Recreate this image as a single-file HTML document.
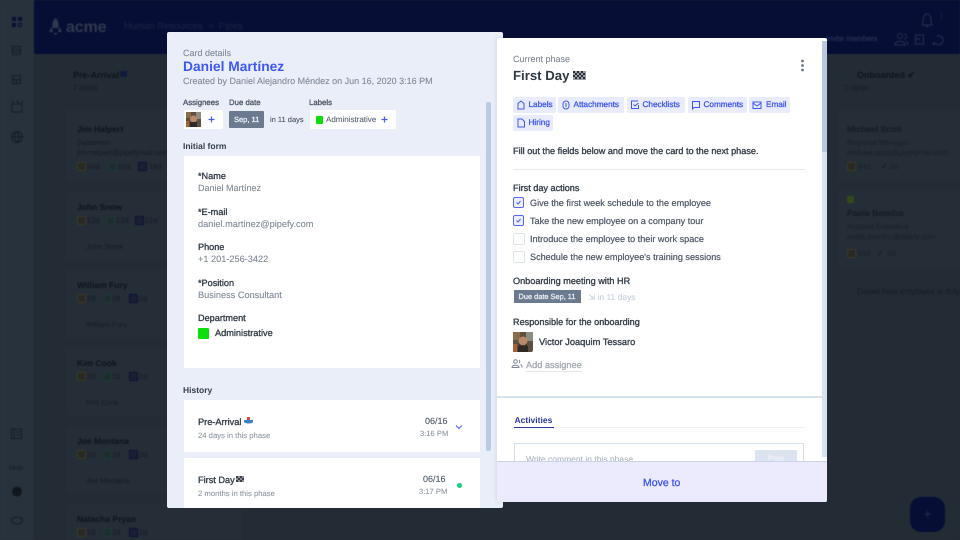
<!DOCTYPE html>
<html><head><meta charset="utf-8">
<style>
html,body{margin:0;padding:0;background:#232b35}
body{width:960px;height:540px;overflow:hidden;position:relative;font-family:"Liberation Sans",sans-serif;text-rendering:geometricPrecision}
#clip{position:absolute;left:0;top:0;width:960px;height:540px;overflow:hidden}
#bg{position:absolute;left:0;top:0;width:960px;height:540px;overflow:hidden;background:#232b35;filter:blur(.5px)}
#fg{position:absolute;left:0;top:0;width:960px;height:540px;overflow:hidden;filter:blur(.2px)}
.a,.t{position:absolute}
.t{white-space:nowrap;line-height:12px;-webkit-text-stroke:.1px currentColor}
.b{font-weight:bold;-webkit-text-stroke:0}
.m{-webkit-text-stroke:.3px currentColor}
.bg1{color:#0e141a}.bg2{color:#191f28}
.d{color:#36404b;font-size:9.15px;-webkit-text-stroke:.35px #36404b}
.g{color:#7f8896;font-size:9px}
.chip{position:absolute;height:16px;background:#e9ecfd;border-radius:2px;color:#3f57f0;font-size:8.2px;-webkit-text-stroke:.3px #3f57f0;line-height:16px;white-space:nowrap}
.chip svg{position:absolute;left:3px;top:3px}
.chip span{position:absolute;left:15.5px;top:0}
.card{position:absolute;background:#252d36}
.cb{position:absolute;left:513px;width:10px;height:10px;border-radius:2px;border:1px solid #dfe3ea;background:#fff}
.cb.on{border:1.5px solid #5a68ee;background:#eceefd;width:9px;height:9px}
.cb svg{position:absolute;left:1px;top:1px}
.sm{position:absolute;width:7px;height:7px;border-radius:1px;border:1px solid}
.s1{border-color:#3a3a26;background:#282a22}.s2{border-color:#1a3a3a;background:#1e2d2c}.s3{border-color:#0a1038;background:#1a2030}
</style></head><body>
<div id="clip">
<div id="bg">
<!-- sidebar -->
<div class="a" style="left:0;top:0;width:34px;height:540px;background:#28323c"></div>
<div class="a" style="left:34px;top:0;width:926px;height:54px;background:#070e35"></div>
<svg class="a" style="left:0;top:0" width="34" height="540" fill="none">
<g fill="#070e35"><rect x="12" y="17" width="4" height="4"/><rect x="18" y="17" width="4" height="4"/><rect x="12" y="23" width="4" height="4"/><rect x="18.5" y="23.5" width="3" height="3" fill="none" stroke="#070e35"/></g>
<g stroke="#151b23"><rect x="12.5" y="46.5" width="8" height="8"/><path d="M12.5 49.5h8M12.5 52h8"/><rect x="12.5" y="75.5" width="8" height="8"/><path d="M12.5 79.5h8M16.5 79.5v4"/><rect x="12" y="104" width="10" height="8"/><path d="M17 100l2 4M13 103l-1-2M22 103l1-2"/><circle cx="17" cy="137" r="5.5"/><path d="M11.5 137h11M17 131.5c-3 3-3 8 0 11M17 131.5c3 3 3 8 0 11"/>
<rect x="11.5" y="429" width="10" height="9.5"/><path d="M14 429v9.5M16 432h4M16 435h4"/></g>
<circle cx="17" cy="491.5" r="5" fill="#12171e"/>
<ellipse cx="17" cy="520.5" rx="5.5" ry="3.5" stroke="#151b23"/>
</svg>
<div class="t" style="left:9px;top:463px;font-size:7px;color:#1b222a">Help</div>

<!-- header -->
<svg class="a" style="left:48px;top:18px" width="16" height="18"><path d="M7.5 0c3 2.5 3.5 6 3 10H4.5C4 6 4.5 2.5 7.5 0zM3.5 9L1 14h4zM11.5 9L14 14h-4zM5 15h5l-2.5 2z" fill="#30384c"/></svg>
<div class="t b" style="left:66px;top:19px;font-size:16px;line-height:17px;color:#30384c;letter-spacing:-.1px">acme</div>
<div class="t" style="left:124px;top:21px;font-size:9.5px;color:#1b2349">Human Resources &nbsp;&gt;&nbsp; Pipes</div>
<div class="t m" style="left:826px;top:33px;font-size:7.5px;color:#272f52">Invite members</div>
<svg class="a" style="left:888px;top:8px" width="66" height="40" fill="none" stroke="#272f52"><path d="M35 12c0-8 8-8 8 0v3l1 2h-10l1-2zM37.5 18.5h3"/><path d="M53 4h1M53 7h1M53 10h1" stroke-width="1.2"/><circle cx="12" cy="28" r="2.5"/><path d="M7 37c0-5 10-5 10 0zM16 26a2.5 2.5 0 010 5M18 33c1.5 1 1.5 3 1.5 4"/><rect x="27.5" y="27" width="8" height="9"/><path d="M27 31h5M49 28a4.5 4.5 0 11-2 7l-2 2 1-3"/></svg>

<!-- Background columns -->
<div class="t b bg1" style="left:73px;top:69px;font-size:9px">Pre-Arrival</div>
<div class="a" style="left:120px;top:71px;width:7px;height:6px;background:#111a3e"></div>
<div class="t bg2" style="left:73px;top:82px;font-size:7.5px">7 cards</div>

<div class="card" style="left:66px;top:110px;width:101px;height:72px"></div>
<div class="t b bg1" style="left:77px;top:123px;font-size:8.5px">Jim Halpert</div>
<div class="t bg2" style="left:77px;top:137px;font-size:7.5px">Salesman</div>
<div class="t bg2" style="left:77px;top:147px;font-size:7.5px">jim.halpert@pipefymail.com</div>
<div class="t bg2" style="left:87px;top:161px;font-size:7.5px">94d</div><div class="t bg2" style="left:118px;top:161px;font-size:7.5px">92d</div><div class="t bg2" style="left:149px;top:161px;font-size:7.5px">18d</div>
<div class="sm s1" style="left:77px;top:162px"></div><div class="sm s2" style="left:108px;top:162px"></div><div class="sm s3" style="left:138px;top:162px"></div>

<div class="card" style="left:66px;top:192px;width:101px;height:68px"></div>
<div class="t b bg1" style="left:77px;top:201px;font-size:8.5px">John Snow</div>
<div class="t bg2" style="left:87px;top:215px;font-size:7.5px">12d</div><div class="t bg2" style="left:116px;top:215px;font-size:7.5px">12d</div><div class="t bg2" style="left:145px;top:215px;font-size:7.5px">12d</div>
<div class="sm s1" style="left:77px;top:216px"></div><div class="sm s2" style="left:106px;top:216px"></div><div class="sm s3" style="left:135px;top:216px"></div>
<div class="t bg2" style="left:86px;top:241px;font-size:7.5px">John Snow</div>

<div class="card" style="left:66px;top:270px;width:101px;height:68px"></div>
<div class="t b bg1" style="left:77px;top:279px;font-size:8.5px">William Fury</div>
<div class="t bg2" style="left:87px;top:293px;font-size:7.5px">2d</div><div class="t bg2" style="left:112px;top:293px;font-size:7.5px">2d</div><div class="t bg2" style="left:139px;top:293px;font-size:7.5px">2d</div>
<div class="sm s1" style="left:77px;top:294px"></div><div class="sm s2" style="left:103px;top:294px"></div><div class="sm s3" style="left:129px;top:294px"></div>
<div class="t bg2" style="left:86px;top:319px;font-size:7.5px">William Fury</div>

<div class="card" style="left:66px;top:348px;width:101px;height:68px"></div>
<div class="t b bg1" style="left:77px;top:357px;font-size:8.5px">Kim Cook</div>
<div class="t bg2" style="left:87px;top:371px;font-size:7.5px">2d</div><div class="t bg2" style="left:112px;top:371px;font-size:7.5px">2d</div><div class="t bg2" style="left:139px;top:371px;font-size:7.5px">2d</div>
<div class="sm s1" style="left:77px;top:372px"></div><div class="sm s2" style="left:103px;top:372px"></div><div class="sm s3" style="left:129px;top:372px"></div>
<div class="t bg2" style="left:86px;top:397px;font-size:7.5px">Kim Cook</div>

<div class="card" style="left:66px;top:426px;width:101px;height:68px"></div>
<div class="t b bg1" style="left:77px;top:435px;font-size:8.5px">Joe Montana</div>
<div class="t bg2" style="left:87px;top:449px;font-size:7.5px">2d</div><div class="t bg2" style="left:112px;top:449px;font-size:7.5px">2d</div><div class="t bg2" style="left:139px;top:449px;font-size:7.5px">2d</div>
<div class="sm s1" style="left:77px;top:450px"></div><div class="sm s2" style="left:103px;top:450px"></div><div class="sm s3" style="left:129px;top:450px"></div>
<div class="t bg2" style="left:86px;top:475px;font-size:7.5px">Joe Montana</div>

<div class="card" style="left:66px;top:504px;width:176px;height:36px"></div>
<div class="t b bg1" style="left:77px;top:513px;font-size:8.5px">Natacha Pryan</div>
<div class="t bg2" style="left:87px;top:527px;font-size:7.5px">2d</div><div class="t bg2" style="left:112px;top:527px;font-size:7.5px">2d</div><div class="t bg2" style="left:139px;top:527px;font-size:7.5px">2d</div>
<div class="sm s1" style="left:77px;top:528px"></div><div class="sm s2" style="left:103px;top:528px"></div><div class="sm s3" style="left:129px;top:528px"></div>

<!-- right column -->
<div class="t b bg1" style="left:857px;top:69px;font-size:9px">Onboarded ✔</div>
<div class="t" style="left:844px;top:69px;font-size:8px;color:#1b3b36">✓</div>
<div class="t bg2" style="left:844px;top:82px;font-size:7.5px">2 cards</div>
<div class="card" style="left:838px;top:110px;width:122px;height:72px"></div>
<div class="t b" style="left:847px;top:123px;font-size:8.5px;color:#151b23">Michael Scott</div>
<div class="t" style="left:847px;top:137px;font-size:7.5px;color:#1b222a">Regional Manager</div>
<div class="t" style="left:847px;top:147px;font-size:7.5px;color:#1b222a">michael.scott@pipefymail.com</div>
<div class="sm s1" style="left:847px;top:162px"></div>
<div class="t" style="left:858px;top:161px;font-size:7.5px;color:#1d242c">94d</div>
<div class="t" style="left:881px;top:161px;font-size:7.5px;color:#12171e">✓</div>
<div class="t" style="left:890px;top:161px;font-size:7.5px;color:#1d242c">3d</div>
<div class="card" style="left:838px;top:190px;width:122px;height:78px"></div>
<div class="a" style="left:847px;top:196px;width:7px;height:7px;background:#324a1a;border-radius:1px"></div>
<div class="t b" style="left:847px;top:207px;font-size:8.5px;color:#151b23">Paola Botelho</div>
<div class="t" style="left:847px;top:221px;font-size:7.5px;color:#1b222a">Account Executive</div>
<div class="t" style="left:847px;top:231px;font-size:7.5px;color:#1b222a">paola.botelho@pipefy.com</div>
<div class="sm s1" style="left:847px;top:249px"></div>
<div class="t" style="left:858px;top:248px;font-size:7.5px;color:#1d242c">93d</div>
<div class="t" style="left:877px;top:248px;font-size:7.5px;color:#12171e">✓</div>
<div class="t" style="left:887px;top:248px;font-size:7.5px;color:#1d242c">3d</div>
<div class="a" style="left:857px;top:286px;width:103px;height:12px;overflow:hidden;line-height:12px;white-space:nowrap;font-size:8px;color:#151b23">Daniel New employee is duly onboarded</div>

<!-- FAB -->
<div class="a" style="left:910px;top:497px;width:35px;height:35px;border-radius:11px;background:#070e35"></div>
<div class="t" style="left:924px;top:508px;font-size:12px;color:#27324c">+</div>
</div>

<div id="fg">
<!-- Left panel -->
<div class="a" style="left:167px;top:32px;width:336px;height:476px;background:#e9eef9;border-radius:2px"></div>
<div class="t g" style="left:183px;top:47px">Card details</div>
<div class="t b" style="left:183px;top:58px;font-size:13.8px;line-height:18px;color:#3e57f5">Daniel Martínez</div>
<div class="t g" style="left:183px;top:75px;font-size:9px">Created by Daniel Alejandro Méndez on Jun 16, 2020 3:16 PM</div>

<div class="t m" style="left:183px;top:97px;font-size:7.8px;color:#4b5563">Assignees</div>
<div class="t m" style="left:229px;top:97px;font-size:7.8px;color:#4b5563">Due date</div>
<div class="t m" style="left:309px;top:97px;font-size:7.8px;color:#4b5563">Labels</div>

<div class="a" style="left:184px;top:110px;width:39px;height:19px;background:#fff;border-radius:2px"></div>
<svg class="a" style="left:186px;top:112px" width="15" height="15"><rect width="15" height="15" fill="#5e5040"/><rect width="5" height="6" fill="#8a6d4a"/><rect x="10" width="5" height="7" fill="#8c8c80"/><circle cx="7.5" cy="7" r="3.5" fill="#b98a68"/><rect x="4" y="10" width="7" height="5" fill="#2f2a26"/><rect y="9" width="3" height="6" fill="#a8623a"/></svg>
<svg class="a" style="left:208px;top:116px" width="7" height="7"><path d="M3.5 .5v6M.5 3.5h6" stroke="#4a5ff0" stroke-width="1.2"/></svg>

<div class="a" style="left:229px;top:111px;width:35px;height:17px;background:#6b7a8e;border-radius:1px"></div>
<div class="t m" style="left:234px;top:113.5px;font-size:7.5px;color:#e8ecf3">Sep, 11</div>
<div class="t" style="left:270px;top:113.5px;font-size:7.5px;color:#4b5563">in 11 days</div>

<div class="a" style="left:310px;top:110px;width:86px;height:19px;background:#fff;border-radius:2px"></div>
<div class="a" style="left:316px;top:116px;width:7px;height:7.5px;background:#0be00b;border-radius:1px"></div>
<div class="t" style="left:326px;top:113.5px;font-size:8px;color:#5b6472">Administrative</div>
<svg class="a" style="left:381px;top:116px" width="7" height="7"><path d="M3.5 .5v6M.5 3.5h6" stroke="#4a5ff0" stroke-width="1.2"/></svg>

<div class="t b" style="left:183px;top:140px;font-size:8.5px;color:#36404b">Initial form</div>

<div class="a" style="left:184px;top:156px;width:296px;height:212px;background:#fff"></div>
<div class="t d" style="left:198px;top:170px">*Name</div>
<div class="t g" style="left:198px;top:182px">Daniel Martínez</div>
<div class="t d" style="left:198px;top:206px">*E-mail</div>
<div class="t g" style="left:198px;top:218px;font-size:9.2px">daniel.martinez@pipefy.com</div>
<div class="t d" style="left:198px;top:241px">Phone</div>
<div class="t g" style="left:198px;top:253px;font-size:9.2px">+1 201-256-3422</div>
<div class="t d" style="left:198px;top:277px">*Position</div>
<div class="t g" style="left:198px;top:289px;font-size:9.2px">Business Consultant</div>
<div class="t d" style="left:198px;top:312px">Department</div>
<div class="a" style="left:198px;top:328px;width:11px;height:11px;background:#0be00b;border-radius:1px"></div>
<div class="t d" style="left:215px;top:327px;font-size:9.2px">Administrative</div>

<div class="t b" style="left:183px;top:384px;font-size:8.5px;color:#36404b">History</div>

<div class="a" style="left:184px;top:400px;width:296px;height:52px;background:#fff"></div>
<div class="t d" style="left:198px;top:416px;font-size:9.2px">Pre-Arrival</div>
<svg class="a" style="left:244px;top:417px" width="9" height="9"><path d="M3 0h3v3H3z" fill="#e04a3a"/><path d="M0 3h9v2c-1 2-8 2-9 0z" fill="#3b7fc4"/></svg>
<div class="t" style="left:198px;top:430px;font-size:7.7px;color:#8f97a3">24 days in this phase</div>
<div class="t" style="left:425px;top:415px;font-size:9px;color:#4b5563">06/16</div>
<div class="t" style="left:420px;top:428px;font-size:7.6px;color:#8f97a3">3:16 PM</div>
<svg class="a" style="left:455px;top:424px" width="8" height="6" fill="none"><path d="M1 1.5l3 3 3-3" stroke="#4a5ff0" stroke-width="1.1"/></svg>

<div class="a" style="left:184px;top:458px;width:296px;height:50px;background:#fff"></div>
<div class="t d" style="left:198px;top:474px;font-size:9.2px">First Day</div>
<svg class="a" style="left:236px;top:476px" width="8" height="6"><rect width="8" height="6" fill="#8d929a"/><path d="M0 0h2v2H0zM4 0h2v2H4zM2 2h2v2H2zM6 2h2v2H6zM0 4h2v2H0zM4 4h2v2H4z" fill="#3a4048"/></svg>
<div class="t" style="left:198px;top:488px;font-size:7.7px;color:#8f97a3">2 months in this phase</div>
<div class="t" style="left:423px;top:473px;font-size:9px;color:#4b5563">06/16</div>
<div class="t" style="left:419px;top:486px;font-size:7.6px;color:#8f97a3">3:17 PM</div>
<div class="a" style="left:457px;top:483px;width:5px;height:5px;border-radius:50%;background:#10d080"></div>

<div class="a" style="left:486px;top:102px;width:5px;height:349px;background:#b9cce4;border-radius:2px"></div>

<!-- Right panel -->
<div class="a" style="left:497px;top:38px;width:330px;height:464px;background:#fff;border-radius:2px;box-shadow:-1px 0 3px rgba(60,80,120,.12)"></div>
<div class="a" style="left:822px;top:41px;width:5px;height:111px;background:#bac7e0"></div>
<div class="a" style="left:822px;top:152px;width:5px;height:305px;background:#d7e3f1"></div>

<div class="t g" style="left:513px;top:53px">Current phase</div>
<div class="t b" style="left:513px;top:68px;font-size:13.2px;line-height:16px;color:#2e3744">First Day</div>
<svg class="a" style="left:573px;top:71px" width="13" height="9"><rect width="13" height="9" fill="#9a9ea6"/><path d="M0 0h2v2H0zM4 0h2v2H4zM8 0h2v2H8zM2 2h2v2H2zM6 2h2v2H6zM10 2h2v2h-2zM0 4h2v2H0zM4 4h2v2H4zM8 4h2v2H8zM2 6h2v2H2zM6 6h2v2H6zM10 6h2v2h-2z" fill="#2a2f36"/></svg>
<svg class="a" style="left:800px;top:59px" width="5" height="13" fill="#6b7685"><circle cx="2.5" cy="2" r="1.4"/><circle cx="2.5" cy="6.5" r="1.4"/><circle cx="2.5" cy="11" r="1.4"/></svg>

<div class="chip" style="left:513px;top:97px;width:43px"><svg width="10" height="10" fill="none" stroke="#3f57f0"><path d="M2 3.5L5 1l3 2.5V9H2z"/></svg><span>Labels</span></div>
<div class="chip" style="left:558px;top:97px;width:66px"><svg width="10" height="10" fill="none" stroke="#3f57f0"><rect x="2" y="1" width="6" height="8" rx="3"/><path d="M5 3v4"/></svg><span>Attachments</span></div>
<div class="chip" style="left:627px;top:97px;width:58px"><svg width="10" height="10" fill="none" stroke="#3f57f0"><path d="M8 1H1.5v7.5H8.500V5M3.500 4.500l1.500 1.500 3.500-3"/></svg><span>Checklists</span></div>
<div class="chip" style="left:688px;top:97px;width:59px"><svg width="10" height="10" fill="none" stroke="#3f57f0"><path d="M1.5 1.5h7v6H3L1.5 9z"/></svg><span>Comments</span></div>
<div class="chip" style="left:749px;top:97px;width:41px"><svg width="10" height="10" fill="none" stroke="#3f57f0"><rect x="1" y="2" width="8" height="6.5"/><path d="M1 3l4 3 4-3"/></svg><span style="left:17px">Email</span></div>
<div class="chip" style="left:513px;top:115px;width:40px"><svg width="10" height="10" fill="none" stroke="#3f57f0"><path d="M2 1h4l2.5 2.5V9H2z"/></svg><span>Hiring</span></div>

<div class="t d" style="left:513px;top:145px">Fill out the fields below and move the card to the next phase.</div>
<div class="a" style="left:513px;top:169px;width:292px;height:1px;background:#e7ebf0"></div>

<div class="t d" style="left:513px;top:182px">First day actions</div>
<div class="cb on" style="top:197px"><svg width="7" height="7" fill="none"><path d="M1.5 3.5l1.500 1.500 2.500-3" stroke="#4a5ff0"/></svg></div>
<div class="t" style="left:530px;top:197px;font-size:9.1px;color:#4b5563;-webkit-text-stroke:.2px #4b5563">Give the first week schedule to the employee</div>
<div class="cb on" style="top:215px"><svg width="7" height="7" fill="none"><path d="M1.5 3.5l1.500 1.500 2.500-3" stroke="#4a5ff0"/></svg></div>
<div class="t" style="left:530px;top:215px;font-size:9.1px;color:#4b5563;-webkit-text-stroke:.2px #4b5563">Take the new employee on a company tour</div>
<div class="cb" style="top:233px"></div>
<div class="t" style="left:530px;top:233px;font-size:9.1px;color:#4b5563;-webkit-text-stroke:.2px #4b5563">Introduce the employee to their work space</div>
<div class="cb" style="top:251px"></div>
<div class="t" style="left:530px;top:251px;font-size:9.1px;color:#4b5563;-webkit-text-stroke:.2px #4b5563">Schedule the new employee's training sessions</div>

<div class="t d" style="left:513px;top:275px">Onboarding meeting with HR</div>
<div class="a" style="left:514px;top:289.5px;width:67px;height:13.5px;background:#6b7a8e"></div>
<div class="t m" style="left:518.5px;top:290.5px;font-size:7.4px;color:#e8ecf3">Due date Sep, 11</div>
<div class="t" style="left:588px;top:291px;font-size:8.5px;color:#c5cede">⇲ in 11 days</div>

<div class="t d" style="left:513px;top:316px">Responsible for the onboarding</div>
<svg class="a" style="left:513px;top:332px" width="20" height="20"><rect width="20" height="20" rx="2" fill="#5e5040"/><rect width="7" height="8" fill="#8a6d4a"/><rect x="13" width="7" height="9" fill="#8c8c80"/><circle cx="10" cy="9" r="4.5" fill="#b98a68"/><path d="M6 11c2 3 6 3 8 0v3H6z" fill="#40342a"/><rect x="5" y="14" width="10" height="6" fill="#2f2a26"/><rect y="12" width="4" height="8" fill="#a8623a"/></svg>
<div class="t d" style="left:539px;top:336px;font-size:9.3px">Victor Joaquim Tessaro</div>
<svg class="a" style="left:511px;top:359px" width="12" height="10" fill="none" stroke="#7f8896"><circle cx="4.5" cy="2.5" r="1.8"/><path d="M1 8.5c0-3 7-3 7 0zM8 1a1.800 1.800 0 010 3M9.500 5.500c1.500 .5 1.500 2 1.500 3"/></svg>
<div class="t m" style="left:526px;top:358.5px;font-size:9.2px;color:#a2a9b4;border-bottom:1px solid #e3e6eb">Add assignee</div>

<div class="a" style="left:497px;top:396px;width:325px;height:2px;background:#d7e2f1"></div>
<div class="t b" style="left:514.5px;top:414px;font-size:8.5px;color:#2c3a9e">Activities</div>
<div class="a" style="left:514px;top:427px;width:40px;height:1px;background:#2c3a9e"></div>
<div class="a" style="left:554px;top:427px;width:251px;height:1px;background:#eef0f4"></div>
<div class="a" style="left:514px;top:443px;width:290px;height:20px;border:1px solid #d5def0;border-bottom:0;box-sizing:border-box"></div>
<div class="t" style="left:526px;top:453px;font-size:8.5px;color:#adb4c0">Write comment in this phase</div>
<div class="a" style="left:755px;top:450px;width:42px;height:12px;background:#dce3f0;border-radius:1px"></div>
<div class="t" style="left:768px;top:453px;font-size:8px;color:#f2f4f8">Post</div>

<!-- Footer -->
<div class="a" style="left:497px;top:461px;width:330px;height:41px;background:#ecebfd;border-top:1px solid #c9d4ec;box-sizing:border-box;border-radius:0 0 2px 2px"></div>
<div class="t m" style="left:643px;top:477px;font-size:10.5px;color:#3e57f5">Move to</div>
</div>
</div>
</body></html>
